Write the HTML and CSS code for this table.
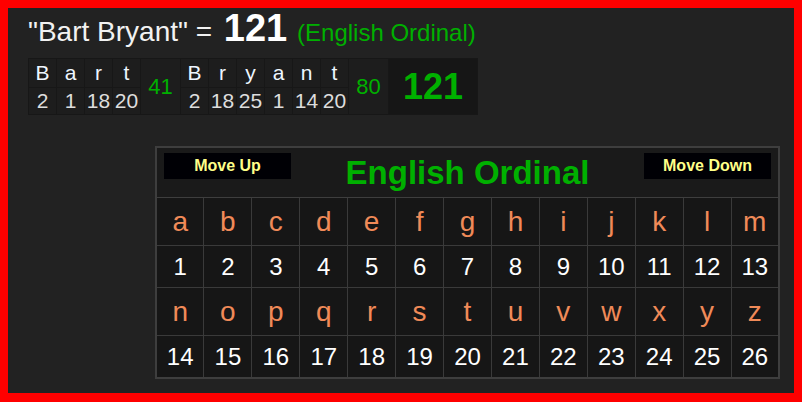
FILE: index.html
```html
<!DOCTYPE html>
<html lang="en">
<head>
    <meta charset="UTF-8">
    <title>Bart Bryant - English Ordinal</title>
    <link rel="stylesheet" href="styles.css">
</head>
<body>
    <div class="page">
        <h1 class="title">"Bart Bryant" = <b class="total">121</b> <span class="cipher">(English Ordinal)</span></h1>

        <table class="breakdown">
            <tr class="letters">
                <td>B</td><td>a</td><td>r</td><td>t</td>
                <td class="word-sum" rowspan="2">41</td>
                <td>B</td><td>r</td><td>y</td><td>a</td><td>n</td><td>t</td>
                <td class="word-sum" rowspan="2">80</td>
                <td class="grand-sum" rowspan="2">121</td>
            </tr>
            <tr class="values">
                <td>2</td><td>1</td><td>18</td><td>20</td>
                <td>2</td><td>18</td><td>25</td><td>1</td><td>14</td><td>20</td>
            </tr>
        </table>

        <div class="chart-wrap">
            <table class="chart">
                <thead>
                    <tr>
                        <th colspan="13">
                            <div class="chart-head">
                                <button class="move-btn">Move Up</button>
                                <span class="chart-title">English Ordinal</span>
                                <button class="move-btn">Move Down</button>
                            </div>
                        </th>
                    </tr>
                </thead>
                <tbody>
                    <tr class="ch-letters">
                        <td>a</td><td>b</td><td>c</td><td>d</td><td>e</td><td>f</td><td>g</td>
                        <td>h</td><td>i</td><td>j</td><td>k</td><td>l</td><td>m</td>
                    </tr>
                    <tr class="ch-values">
                        <td>1</td><td>2</td><td>3</td><td>4</td><td>5</td><td>6</td><td>7</td>
                        <td>8</td><td>9</td><td>10</td><td>11</td><td>12</td><td>13</td>
                    </tr>
                    <tr class="ch-letters">
                        <td>n</td><td>o</td><td>p</td><td>q</td><td>r</td><td>s</td><td>t</td>
                        <td>u</td><td>v</td><td>w</td><td>x</td><td>y</td><td>z</td>
                    </tr>
                    <tr class="ch-values">
                        <td>14</td><td>15</td><td>16</td><td>17</td><td>18</td><td>19</td><td>20</td>
                        <td>21</td><td>22</td><td>23</td><td>24</td><td>25</td><td>26</td>
                    </tr>
                </tbody>
            </table>
        </div>
    </div>
</body>
</html>
```

FILE: styles.css
```css
html {
    background-color: #ff0000;
}

body {
    margin: 0;
    font-family: "Liberation Sans", Arial, sans-serif;
    background-color: #ff0000;
}

.page {
    margin: 8px 8px 0 8px;
    height: 379px;
    padding-top: 6px;
    background-color: #222222;
    color: #eeeeee;
}

.title {
    margin: 0 0 9px 20px;
    font-size: 28px;
    font-weight: normal;
    line-height: 32px;
    color: #f2f2f2;
}

.title .total {
    margin-left: 4px;
    margin-right: 2px;
    font-size: 38px;
    line-height: 28px;
    color: #ffffff;
}

.title .cipher {
    font-size: 24px;
    color: #00b000;
}

/* word breakdown */
.breakdown {
    margin-left: 20px;
    border-collapse: collapse;
}

.breakdown td {
    border: 1px solid #171717;
    background-color: #1d1d1d;
    text-align: center;
    padding: 0;
    width: 27px;
}

.breakdown .letters td {
    height: 28px;
    font-size: 21px;
    color: #eef6ff;
}

.breakdown .values td {
    height: 26px;
    font-size: 21px;
    color: #dddddd;
}

.breakdown td.word-sum {
    width: 39px;
    font-size: 22px;
    color: #00b000;
}

.breakdown td.grand-sum {
    width: 88px;
    font-size: 36px;
    font-weight: bold;
    color: #00b000;
    background-color: #161616;
}

/* cipher chart */
.chart-wrap {
    margin-top: 31px;
    padding-left: 147px;
}

.chart {
    width: 625px;
    table-layout: fixed;
    border-collapse: collapse;
    border: 2px solid #3e3e3e;
    background-color: #161616;
}

.chart th {
    padding: 0;
    height: 49px;
    border: 1px solid #3e3e3e;
    background-color: #1a1a1a;
    vertical-align: top;
}

.chart-head {
    display: flex;
    justify-content: space-between;
    align-items: flex-start;
    padding: 5px 7px 0 7px;
}

.move-btn {
    width: 127px;
    height: 26px;
    padding: 0;
    border: none;
    background-color: #000005;
    color: #ffff88;
    font-family: "Liberation Sans", Arial, sans-serif;
    font-size: 16px;
    font-weight: bold;
}

.chart-title {
    margin-top: 1px;
    font-size: 33px;
    font-weight: bold;
    color: #00b000;
    line-height: 38px;
}

.chart td {
    padding: 0;
    border: 1px solid #3a3a3a;
    text-align: center;
    font-size: 24px;
}

.chart .ch-letters td {
    height: 47px;
    font-size: 28px;
    color: #f08a58;
}

.chart .ch-values td {
    height: 41px;
    color: #ffffff;
}
```
